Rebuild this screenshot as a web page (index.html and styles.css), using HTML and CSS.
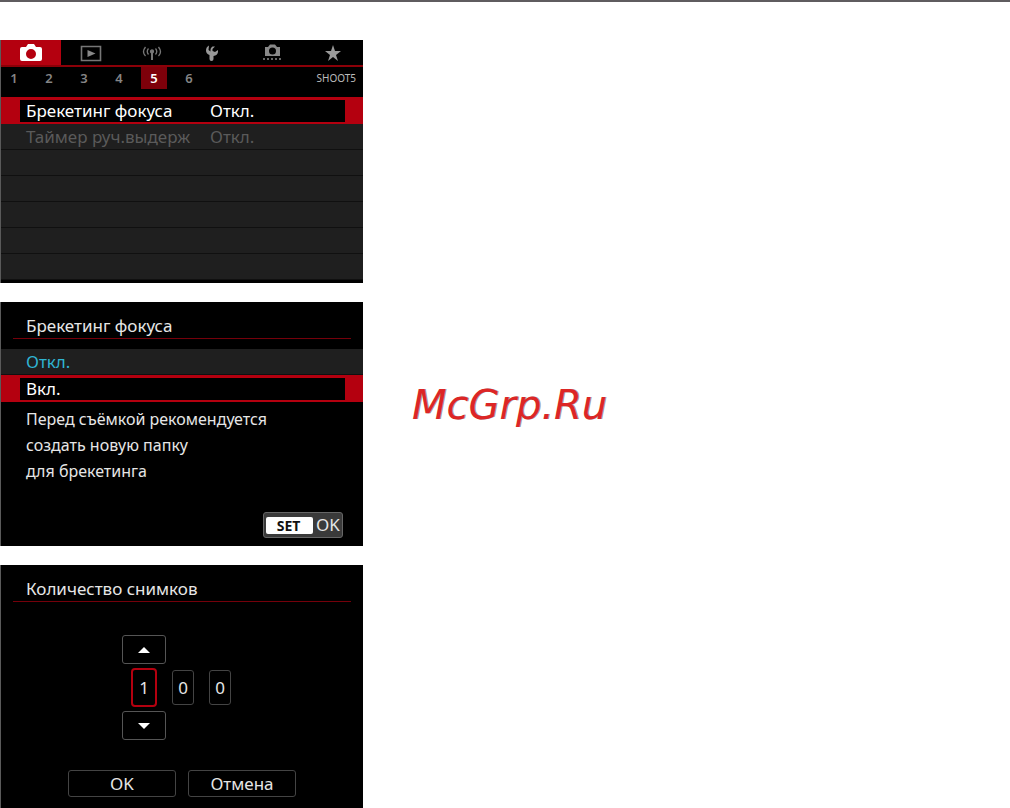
FILE: index.html
```
<!DOCTYPE html>
<html lang="ru">
<head>
  <meta charset="UTF-8">
  <meta name="viewport" content="width=device-width, initial-scale=1.0">
  <title>Брекетинг фокуса</title>
  <link rel="stylesheet" href="styles.css">
</head>
<body>
<main class="page">
  <div class="screens">

    <!-- Shooting menu -->
    <section class="screen">
      <nav class="tabs">
        <button class="tab active" aria-label="Съёмка">
          <svg width="24" height="18" viewBox="0 0 24 18"><path fill="#fff" fill-rule="evenodd" d="M3 3h4l2-3h6l2 3h4q2 0 2 2v10q0 2-2 2H3q-2 0-2-2V5q0-2 2-2zM12 5a5 5 0 1 0 0 10a5 5 0 1 0 0-10z"/></svg>
        </button>
        <button class="tab" aria-label="Просмотр">
          <svg width="22" height="18" viewBox="0 0 22 18"><path fill="none" stroke="#777" stroke-width="1.6" d="M1.500 2.500h19v14h-19z"/><path fill="#888" d="M7.500 6l8 3.500-8 3.500z"/></svg>
        </button>
        <button class="tab" aria-label="Беспроводная связь">
          <svg width="22" height="18" viewBox="0 0 22 18" fill="none" stroke="#777" stroke-width="1.3"><path d="M4.500 3q-4 5 0 9M7.500 4.500q-2.500 3 0 6M17.500 3q4 5 0 9M14.500 4.500q2.500 3 0 6"/><circle cx="11" cy="7.500" r="1.500" fill="#777"/><path stroke-width="2" d="M11 8v8"/></svg>
        </button>
        <button class="tab" aria-label="Настройка">
          <svg width="18" height="18" viewBox="0 0 18 18"><path fill="#999" d="M6 1.500Q3 3 3 6.500q0 3 3.500 4.500v4q0 2 2 2t2-2v-3q4-.5 4.500-4V6l-3 2-2.500-1V5L12 2.500h-2.500Q7 4 7.500 7.500L5.500 6z"/></svg>
        </button>
        <button class="tab" aria-label="Пользовательские функции">
          <svg width="22" height="18" viewBox="0 0 22 18"><path fill="#888" fill-rule="evenodd" d="M4 3h3l2-2.500h5L16 3h3v9H4zM11.500 3.500a3.500 3.500 0 1 0 0 7a3.500 3.500 0 1 0 0-7z"/><path stroke="#666" stroke-width="2" stroke-dasharray="2 2" d="M2 15h18"/></svg>
        </button>
        <button class="tab" aria-label="Моё меню">
          <svg width="18" height="18" viewBox="0 0 18 18"><path fill="#999" d="M9 1l2 6h6l-5 4 2 6-5-4-5 4 2-6-5-4h6z"/></svg>
        </button>
      </nav>
      <nav class="subtabs">
        <button class="subtab">1</button>
        <button class="subtab">2</button>
        <button class="subtab">3</button>
        <button class="subtab">4</button>
        <button class="subtab active">5</button>
        <button class="subtab">6</button>
        <span class="subtab-name">SHOOT5</span>
      </nav>
      <div class="menu">
        <button class="row selected"><span class="cell">Брекетинг фокуса</span><span>Откл.</span></button>
        <button class="row disabled" disabled><span class="cell">Таймер руч.выдерж</span><span>Откл.</span></button>
        <div class="row"></div>
        <div class="row"></div>
        <div class="row"></div>
        <div class="row"></div>
        <div class="row"></div>
      </div>
    </section>

    <!-- Focus bracketing on / off -->
    <section class="screen">
      <h2 class="title">Брекетинг фокуса</h2>
      <div class="options">
        <button class="row current">Откл.</button>
        <button class="row selected">Вкл.</button>
      </div>
      <p class="hint">Перед съёмкой рекомендуется<br>создать новую папку<br>для брекетинга</p>
      <button class="set"><span class="set-key">SET</span><span>OK</span></button>
    </section>

    <!-- Number of shots -->
    <section class="screen">
      <h2 class="title">Количество снимков</h2>
      <div class="counter">
        <button class="step" aria-label="Больше"><svg width="12" height="6" viewBox="0 0 12 6"><path fill="#fff" d="M6 0l6 6H0z"/></svg></button>
        <div class="digits">
          <button class="digit active">1</button>
          <button class="digit">0</button>
          <button class="digit">0</button>
        </div>
        <button class="step" aria-label="Меньше"><svg width="12" height="6" viewBox="0 0 12 6"><path fill="#fff" d="M0 0h12L6 6z"/></svg></button>
      </div>
      <div class="actions">
        <button class="action">OK</button>
        <button class="action">Отмена</button>
      </div>
    </section>
  </div>

  <div class="watermark">McGrp.Ru</div>
</main>
</body>
</html>
```
FILE: styles.css
```
* {
  margin: 0;
  padding: 0;
  box-sizing: border-box;
}

body {
  font-family: "Noto Sans", sans-serif;
  font-size: 17px;
  line-height: 26px;
  background: #fff;
  color: #e6e6e6;
}

button {
  font: inherit;
  color: inherit;
  background: none;
  border: none;
  cursor: pointer;
}

svg {
  display: block;
}

.page {
  display: flex;
  border-top: 2px solid #5f5c5f;
  padding-top: 38px;
}

.screens {
  display: flex;
  flex-direction: column;
  gap: 19px;
  flex: 0 1 363px;
}

.screen {
  background: #000;
  border-left: 1px solid #5a5a5a;
}

/* Tabs */
.tabs {
  display: grid;
  grid-template-columns: repeat(6, 1fr);
  border-bottom: 2px solid #8c0008;
}

.tab {
  display: flex;
  justify-content: center;
  align-items: center;
  height: 25px;
}

.tab.active {
  background: #b4000f;
}

.subtabs {
  display: flex;
  gap: 9px;
  height: 30px;
  padding-right: 7px;
}

.subtab {
  width: 26px;
  height: 22px;
  font-size: 13px;
  font-weight: 600;
  line-height: 22px;
  color: #858585;
}

.subtab.active {
  background: #7d000a;
  color: #fff;
}

.subtab-name {
  margin-left: auto;
  font-size: 10px;
  line-height: 22px;
  color: #bbb;
}

/* Menu rows */
.menu {
  padding-bottom: 3px;
}

.row {
  display: flex;
  align-items: center;
  width: 100%;
  height: 26px;
  padding: 0 25px;
  background: #1f1f1f;
  border-bottom: 1px solid #101010;
  text-align: left;
}

.cell {
  width: 184px;
}

.row.selected {
  height: 27px;
  padding: 0 6px;
  background: #000;
  border: solid #b4000f;
  border-width: 3px 18px 2px 19px;
  color: #fff;
}

.row.disabled {
  color: #5a5a5a;
}

.row.current {
  color: #2fb4d2;
}

/* Dialogs */
.title {
  margin: 0 12px;
  padding: 11px 13px 0;
  height: 37px;
  font-size: 17px;
  font-weight: 400;
  border-bottom: 1px solid #75000a;
}

.options {
  padding-top: 10px;
}

.hint {
  padding: 4px 25px 0;
  font-size: 16px;
}

.set {
  display: flex;
  align-items: center;
  gap: 3px;
  width: 80px;
  height: 26px;
  margin: 28px 20px 8px auto;
  padding: 0 2px;
  background: #3a3a3a;
  border: 1px solid #666;
  border-radius: 3px;
}

.set-key {
  width: 47px;
  padding-right: 2px;
  background: #fff;
  color: #111;
  border-radius: 2px;
  font-size: 14px;
  font-weight: 700;
  line-height: 17px;
  text-align: center;
}

/* Shots counter */
.counter {
  display: flex;
  flex-direction: column;
  gap: 4px;
  padding: 33px 0 0 121px;
}

.step {
  display: flex;
  justify-content: center;
  align-items: center;
  width: 44px;
  height: 29px;
  border: 1px solid #555;
  border-radius: 3px;
}

.digits {
  display: flex;
  align-items: center;
  gap: 15px;
  padding-left: 9px;
}

.digit {
  width: 22px;
  height: 35px;
  border: 1px solid #444;
  border-radius: 3px;
}

.digit.active {
  width: 26px;
  height: 39px;
  border: 2px solid #b4000f;
  border-radius: 4px;
}

.actions {
  display: flex;
  justify-content: center;
  gap: 12px;
  padding: 30px 0 11px;
}

.action {
  width: 108px;
  height: 27px;
  border: 1px solid #444;
  border-radius: 3px;
  line-height: 24px;
}

.watermark {
  margin: 341px 0 0 49px;
  font-family: "DejaVu Sans", sans-serif;
  font-size: 40px;
  font-style: oblique;
  line-height: 48px;
  color: #dc2626;
  text-shadow: 1px 0 0 #999;
}
```
